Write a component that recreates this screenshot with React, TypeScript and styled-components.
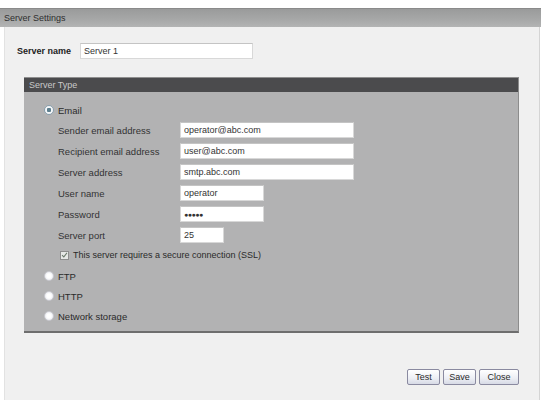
import { FunctionComponent } from 'react';
import styled, { createGlobalStyle } from 'styled-components';

const GlobalStyle = createGlobalStyle`
  html, body {
    margin: 0;
    padding: 0;
    background: #ffffff;
  }
  body {
    font-family: 'Liberation Sans', Arial, sans-serif;
  }
`;

interface Field {
  label: string;
  value: string;
  width: number;
}

const fields: Field[] = [
  { label: 'Sender email address', value: 'operator@abc.com', width: 174 },
  { label: 'Recipient email address', value: 'user@abc.com', width: 174 },
  { label: 'Server address', value: 'smtp.abc.com', width: 174 },
  { label: 'User name', value: 'operator', width: 84 },
  { label: 'Password', value: '●●●●●', width: 84 },
  { label: 'Server port', value: '25', width: 44 },
];

const others = ['FTP', 'HTTP', 'Network storage'];

const App: FunctionComponent = () => {
  return (
    <>
      <GlobalStyle />
      <Window>
        <TitleBar>Server Settings</TitleBar>
        <Content>
          <NameRow>
            <NameLabel>Server name</NameLabel>
            <TextBox width={173} readOnly value="Server 1" />
          </NameRow>

          <Panel>
            <PanelHeader>Server Type</PanelHeader>
            <PanelBody>
              <OptionRow>
                <Radio checked />
                <OptionText>Email</OptionText>
              </OptionRow>

              <FormGrid>
                {fields.map((f) => (
                  <FormRow key={f.label}>
                    <FieldLabel>{f.label}</FieldLabel>
                    <TextBox width={f.width} readOnly value={f.value} small={f.label === 'Password'} />
                  </FormRow>
                ))}
              </FormGrid>

              <CheckRow>
                <CheckBox>
                  <svg width="8" height="8" viewBox="0 0 8 8">
                    <path d="M1.2 4.2 L3.2 6.2 L6.8 1.6" fill="none" stroke="#6c7a6c" strokeWidth="1.2" />
                  </svg>
                </CheckBox>
                <CheckText>This server requires a secure connection (SSL)</CheckText>
              </CheckRow>

              {others.map((o) => (
                <OptionRow key={o}>
                  <Radio />
                  <OptionText>{o}</OptionText>
                </OptionRow>
              ))}
            </PanelBody>
          </Panel>

          <ButtonBar>
            <Button>Test</Button>
            <Button>Save</Button>
            <Button wide>Close</Button>
          </ButtonBar>
        </Content>
      </Window>
    </>
  );
};

export default App;

const Window = styled.div`
  width: 541px;
  margin-top: 8px;
`;

const TitleBar = styled.div`
  height: 19px;
  line-height: 19px;
  padding-left: 4px;
  background: linear-gradient(#9a9b9b, #a7a8a8 60%, #b3b4b4);
  border-top: 1px solid #8a8a8a;
  box-sizing: border-box;
  color: #2e2e2e;
  font-size: 9px;
`;

const Content = styled.div`
  height: 373px;
  margin-left: 4px;
  width: 536px;
  background: #f0f0f0;
  border-left: 1px solid #e2e2e2;
  border-right: 1px solid #d4d4d4;
  box-sizing: border-box;
  display: flex;
  flex-direction: column;
  padding-top: 15px;
`;

const NameRow = styled.div`
  display: flex;
  align-items: center;
  padding-left: 12px;
  height: 17px;
`;

const NameLabel = styled.span`
  width: 63px;
  font-size: 9px;
  font-weight: bold;
  color: #222;
`;

const TextBox = styled.input<{ width: number; small?: boolean }>`
  width: ${(p) => p.width}px;
  height: 16px;
  box-sizing: border-box;
  margin: 0;
  padding: 0 3px;
  border: 1px solid #d8d8d8;
  border-top-color: #c4c4c4;
  background: #ffffff;
  color: #333;
  font-family: 'Liberation Sans', Arial, sans-serif;
  font-size: ${(p) => (p.small ? '7px' : '9px')};
  letter-spacing: ${(p) => (p.small ? '-0.5px' : '0')};
  outline: none;
`;

const Panel = styled.div`
  margin-top: 18px;
  margin-left: 19px;
  width: 495px;
  border-bottom: 2px solid #6e6e6e;
  border-right: 1px solid #8c8c8c;
  box-sizing: border-box;
`;

const PanelHeader = styled.div`
  height: 15px;
  line-height: 15px;
  padding-left: 5px;
  background: #4b4b4d;
  border-top: 1px solid #8f8f8f;
  box-sizing: border-box;
  color: #c9c9c9;
  font-size: 9px;
`;

const PanelBody = styled.div`
  background: #b2b2b3;
  padding: 8px 0 5px 20px;
  display: flex;
  flex-direction: column;
`;

const OptionRow = styled.div`
  display: flex;
  align-items: center;
  height: 20px;
  gap: 4px;
`;

const Radio = styled.span<{ checked?: boolean }>`
  width: 10px;
  height: 10px;
  border-radius: 50%;
  box-sizing: border-box;
  border: 1px solid ${(p) => (p.checked ? '#8aa0ae' : '#c9c9cf')};
  background: ${(p) =>
    p.checked
      ? 'radial-gradient(circle, #5d7f8e 0 2px, #f4f6f8 2.5px)'
      : 'radial-gradient(circle, #ffffff 0 2px, #e4e6ec 5px)'};
`;

const OptionText = styled.span`
  font-size: 9.5px;
  color: #2a2a2a;
`;

const CheckText = styled.span`
  font-size: 9px;
  color: #2a2a2a;
`;

const FormGrid = styled.div`
  display: flex;
  flex-direction: column;
  gap: 5px;
  margin-top: 2px;
  padding-left: 14px;
`;

const FormRow = styled.div`
  display: grid;
  grid-template-columns: 122px auto;
  align-items: center;
`;

const FieldLabel = styled.span`
  font-size: 9.5px;
  color: #333;
`;

const CheckRow = styled.div`
  display: flex;
  align-items: center;
  height: 22px;
  margin-top: 1px;
  padding-left: 16px;
  gap: 4px;
`;

const CheckBox = styled.span`
  width: 9px;
  height: 9px;
  box-sizing: border-box;
  border: 1px solid #8d8d8d;
  background: #e6e8e6;
  display: flex;
  align-items: center;
  justify-content: center;
`;

const ButtonBar = styled.div`
  display: flex;
  justify-content: flex-end;
  gap: 3px;
  margin-top: 36px;
  width: 514px;
`;

const Button = styled.button<{ wide?: boolean }>`
  height: 16px;
  width: ${(p) => (p.wide ? '40px' : '33px')};
  box-sizing: border-box;
  padding: 0;
  border: 1px solid #8a8aa0;
  border-radius: 2px;
  background: linear-gradient(#ffffff, #eceef4 60%, #d7dae6);
  color: #2a2a2a;
  font-family: 'Liberation Sans', Arial, sans-serif;
  font-size: 9px;
`;
